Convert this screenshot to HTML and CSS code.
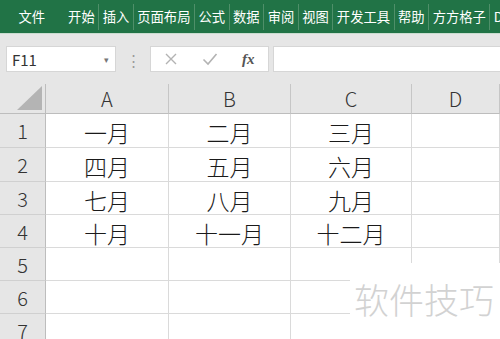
FILE: index.html
```html
<!DOCTYPE html>
<html>
	<head>
		<meta charset="UTF-8">
		<title>工作簿</title>
		<link rel="stylesheet" href="styles.css">
	</head>
	<body>
		<div class="app">
			<ul class="ribbon">
				<li class="file">文件</li>
				<li>开始</li>
				<li>插入</li>
				<li>页面布局</li>
				<li>公式</li>
				<li>数据</li>
				<li>审阅</li>
				<li>视图</li>
				<li>开发工具</li>
				<li>帮助</li>
				<li>方方格子</li>
				<li class="cut">D</li>
			</ul>
			<div class="formula">
				<div class="namebox"><span>F11</span><i>▾</i></div>
				<div class="dots">⋮</div>
				<div class="fxbox">
					<svg width="14" height="14" viewBox="0 0 14 14"><path d="M2 2L12 12M12 2L2 12" stroke="#b3b3b3" stroke-width="1.4" fill="none"/></svg>
					<svg width="16" height="14" viewBox="0 0 16 14"><path d="M1.5 7.5L6 12L14.5 2" stroke="#b3b3b3" stroke-width="1.6" fill="none"/></svg>
					<em>fx</em>
				</div>
				<div class="input"></div>
			</div>
			<div class="sheet">
				<div class="corner"><b></b></div>
				<div class="colh">A</div>
				<div class="colh">B</div>
				<div class="colh">C</div>
				<div class="colh">D</div>

				<div class="rowh">1</div>
				<div class="cell">一月</div>
				<div class="cell">二月</div>
				<div class="cell">三月</div>
				<div class="cell"></div>

				<div class="rowh">2</div>
				<div class="cell">四月</div>
				<div class="cell">五月</div>
				<div class="cell">六月</div>
				<div class="cell"></div>

				<div class="rowh">3</div>
				<div class="cell">七月</div>
				<div class="cell">八月</div>
				<div class="cell">九月</div>
				<div class="cell"></div>

				<div class="rowh">4</div>
				<div class="cell">十月</div>
				<div class="cell">十一月</div>
				<div class="cell">十二月</div>
				<div class="cell"></div>

				<div class="rowh">5</div>
				<div class="cell"></div>
				<div class="cell"></div>
				<div class="cell"></div>
				<div class="cell"></div>

				<div class="rowh">6</div>
				<div class="cell"></div>
				<div class="cell"></div>
				<div class="cell"></div>
				<div class="cell"></div>

				<div class="rowh">7</div>
				<div class="cell"></div>
				<div class="cell"></div>
				<div class="cell"></div>
				<div class="cell"></div>
			</div>
			<div class="mark">软件技巧</div>
		</div>
	</body>
</html>
```

FILE: styles.css
```css
*{
	margin: 0;
	padding: 0;
	box-sizing: border-box;
}
body{
	width: 500px;
	height: 339px;
	overflow: hidden;
	background: #fff;
	font-family: "Noto Sans CJK SC", "Noto Sans", sans-serif;
}
.app{
	position: relative;
	width: 500px;
	height: 339px;
	overflow: hidden;
}
.ribbon{
	display: flex;
	align-items: center;
	height: 34px;
	padding-left: 15px;
	background: #217346;
	border-bottom: 1px solid #c9dccf;
	list-style: none;
	white-space: nowrap;
}
.ribbon li{
	flex: none;
	height: 26px;
	padding: 0 3.5px;
	font-size: 13.3px;
	line-height: 26px;
	color: #fff;
	border-right: 1px solid #4f8f69;
}
.ribbon li.file{
	margin-right: 16px;
	border-right: none;
}
.ribbon li.cut{
	border-right: none;
}
.formula{
	display: flex;
	align-items: center;
	height: 50px;
	padding: 0 0 0 6px;
	background: #e6e6e6;
}
.namebox{
	display: flex;
	align-items: center;
	justify-content: space-between;
	width: 110px;
	height: 26px;
	padding: 0 6px 0 5px;
	background: #fff;
	border: 1px solid #d6d6d6;
	font-size: 15px;
	color: #333;
}
.namebox i{
	font-style: normal;
	font-size: 9px;
	color: #777;
}
.dots{
	width: 34px;
	text-align: center;
	font-size: 15px;
	color: #9a9a9a;
}
.fxbox{
	display: flex;
	align-items: center;
	gap: 24px;
	width: 119px;
	height: 26px;
	padding-left: 13px;
	background: #fff;
	border: 1px solid #d6d6d6;
}
.fxbox em{
	font-family: "Liberation Serif", serif;
	font-size: 15px;
	font-weight: bold;
	color: #555;
}
.input{
	flex: 1;
	height: 26px;
	margin-left: 4px;
	background: #fff;
	border: 1px solid #d6d6d6;
	border-right: none;
}
.sheet{
	display: grid;
	grid-template-columns: 46px 123px 122px 121px 88px;
	grid-template-rows: 30px 34px 34px 33px 33px 33px 33px 33px;
	background: #fff;
	font-weight: 300;
}
.corner{
	position: relative;
	background: #e6e6e6;
	border-right: 1px solid #bdbdbd;
	border-bottom: 1px solid #bdbdbd;
}
.corner b{
	position: absolute;
	right: 3px;
	bottom: 3px;
	width: 0;
	height: 0;
	border-left: 25px solid transparent;
	border-bottom: 24px solid #b4b4b4;
}
.colh{
	display: flex;
	align-items: center;
	justify-content: center;
	background: #e6e6e6;
	border-right: 1px solid #c6c6c6;
	border-bottom: 1px solid #bdbdbd;
	font-size: 20px;
	color: #333;
}
.rowh{
	display: flex;
	align-items: center;
	justify-content: center;
	background: #e6e6e6;
	border-right: 1px solid #bdbdbd;
	border-bottom: 1px solid #d0d0d0;
	font-size: 20px;
	color: #333;
}
.cell{
	display: flex;
	align-items: center;
	justify-content: center;
	padding-top: 3px;
	border-right: 1px solid #dadada;
	border-bottom: 1px solid #dadada;
	font-size: 23px;
	color: #1a1a1a;
}
.mark{
	position: absolute;
	left: 350px;
	top: 263px;
	width: 150px;
	height: 76px;
	padding: 16px 0 0 4px;
	background: #fff;
	font-size: 35px;
	font-weight: 300;
	line-height: 40px;
	color: #d2d2d2;
}
```
